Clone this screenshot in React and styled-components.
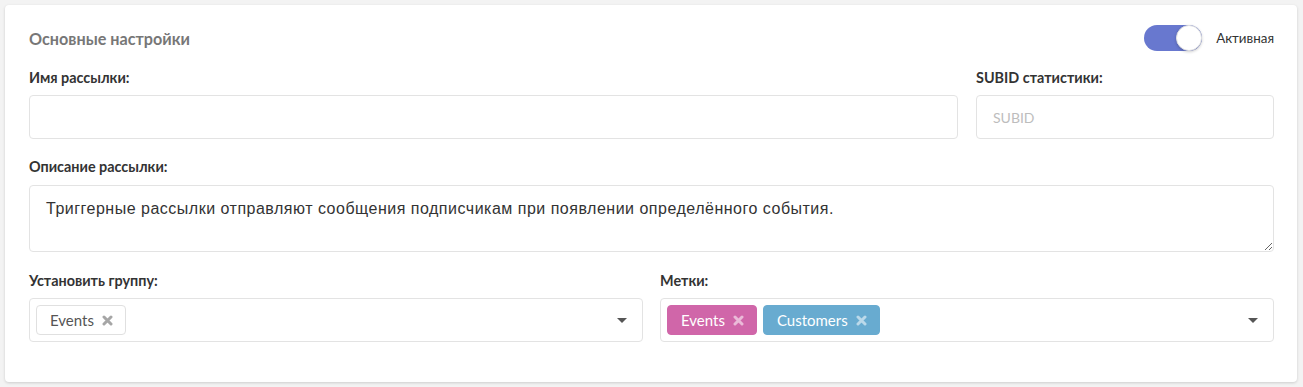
import React from 'react';
import styled, { createGlobalStyle } from 'styled-components';

const GlobalStyle = createGlobalStyle`
  html, body { margin: 0; padding: 0; background: #f3f3f3; }
  body { font-family: Lato, "Open Sans", sans-serif; color: #333; }
  * { box-sizing: border-box; }
`;

const Page = styled.div`
  padding: 5px 6px 5px 5px;
`;

const Card = styled.div`
  background: #fff;
  border-radius: 4px;
  box-shadow: 0 1px 3px rgba(0, 0, 0, 0.16);
  padding: 20px 23px 40px 24px;
`;

const Header = styled.div`
  display: flex;
  align-items: center;
  justify-content: space-between;
  height: 26px;
  margin-bottom: 18px;
`;

const Title = styled.h2`
  margin: 0;
  font-size: 16.2px;
  font-weight: 700;
  color: #777;
`;

const SwitchWrap = styled.label`
  display: flex;
  align-items: center;
  gap: 14px;
  font-size: 13.4px;
  color: #333;
`;

const Track = styled.span`
  position: relative;
  width: 58px;
  height: 26px;
  border-radius: 13px;
  background: ${p => (p.on ? '#6878cf' : '#ddd')};
`;

const Knob = styled.span`
  position: absolute;
  top: 0;
  left: ${p => (p.on ? '32px' : '0')};
  width: 26px;
  height: 26px;
  border-radius: 50%;
  background: #fff;
  border: 1px solid #e2e2e2;
  box-shadow: 0 1px 3px rgba(0, 0, 0, 0.2);
`;

const Row = styled.div`
  display: grid;
  grid-template-columns: ${p => p.cols};
  column-gap: ${p => p.gap || '17px'};
  margin-bottom: ${p => p.mb || '0'};
`;

const Field = styled.div`
  display: flex;
  flex-direction: column;
  margin-bottom: ${p => p.mb || '0'};
`;

const Label = styled.label`
  font-size: 14.4px;
  font-weight: 700;
  color: #333;
  line-height: 18px;
  margin-bottom: ${p => p.mb || '8px'};
`;

const Input = styled.input`
  height: 44px;
  border: 1px solid #e3e3e3;
  border-radius: 4px;
  padding: 0 16px;
  font-family: Lato, sans-serif;
  font-size: 14px;
  outline: none;
  &::placeholder { color: #bdbdbd; }
`;

const Area = styled.textarea`
  height: 67px;
  border: 1px solid #e3e3e3;
  border-radius: 4px;
  padding: 14px 16px 10px;
  font-family: "Liberation Sans", Arial, sans-serif;
  font-size: 16px;
  letter-spacing: 0.5px;
  color: #333;
  resize: vertical;
  outline: none;
`;

const Select = styled.div`
  height: 44px;
  border: 1px solid #e3e3e3;
  border-radius: 4px;
  display: flex;
  align-items: center;
  padding: 0 15px 0 6px;
  gap: 6px;
`;

const Tag = styled.span`
  display: inline-flex;
  align-items: center;
  gap: 8px;
  height: 30px;
  padding: 0 12px 0 13px;
  border-radius: 4px;
  font-size: 15px;
  color: ${p => (p.bg ? '#fff' : '#555')};
  background: ${p => p.bg || '#fff'};
  border: 1px solid ${p => p.bg || '#e0e0e0'};
`;

const CrossIcon = ({ light }) => (
  <svg width="11" height="11" viewBox="0 0 11 11">
    <path
      d="M2 2 L9 9 M9 2 L2 9"
      stroke={light ? 'rgba(255,255,255,0.55)' : '#a6a6a6'}
      strokeWidth="3"
      strokeLinecap="round"
    />
  </svg>
);

const Caret = styled.span`
  margin-left: auto;
  width: 0;
  height: 0;
  border-left: 5px solid transparent;
  border-right: 5px solid transparent;
  border-top: 5px solid #555;
`;

const App = () => (
  <Page>
    <GlobalStyle />
    <Card>
      <Header>
        <Title>Основные настройки</Title>
        <SwitchWrap>
          <Track on>
            <Knob on />
          </Track>
          Активная
        </SwitchWrap>
      </Header>
      <Row cols="1fr 298px" gap="18px" mb="19px">
        <Field>
          <Label>Имя рассылки:</Label>
          <Input />
        </Field>
        <Field>
          <Label>SUBID статистики:</Label>
          <Input placeholder="SUBID" />
        </Field>
      </Row>
      <Field mb="20px">
        <Label mb="9px">Описание рассылки:</Label>
        <Area defaultValue="Триггерные рассылки отправляют сообщения подписчикам при появлении определённого события." />
      </Field>
      <Row cols="1fr 1fr">
        <Field>
          <Label>Установить группу:</Label>
          <Select>
            <Tag>Events <CrossIcon /></Tag>
            <Caret />
          </Select>
        </Field>
        <Field>
          <Label>Метки:</Label>
          <Select>
            <Tag bg="#d066a9">Events <CrossIcon light /></Tag>
            <Tag bg="#68abd0">Customers <CrossIcon light /></Tag>
            <Caret />
          </Select>
        </Field>
      </Row>
    </Card>
  </Page>
);

export default App;
